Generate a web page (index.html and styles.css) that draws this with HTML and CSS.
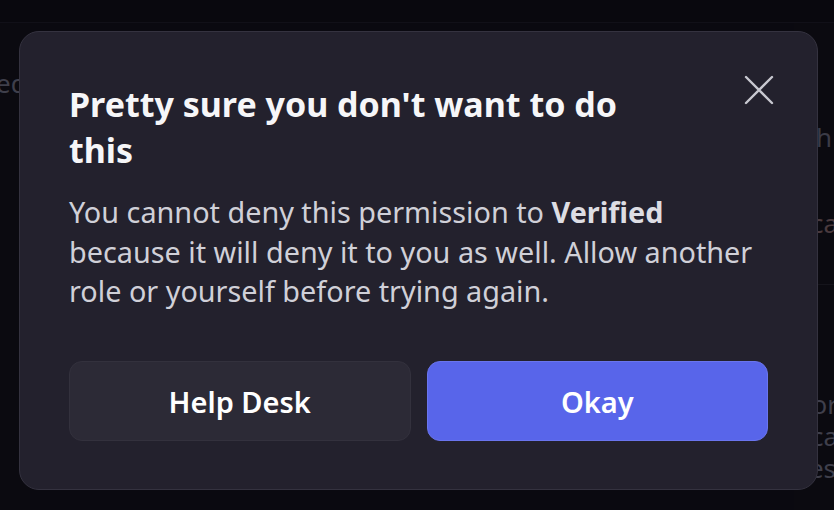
FILE: index.html
```html
<!DOCTYPE html>
<html lang="en">
<head>
<meta charset="utf-8">
<title>Confirm</title>
<link rel="stylesheet" href="styles.css">
</head>
<body>
<div class="backdrop">
  <div class="topbar"></div>
  <div class="bg-main">
    <div class="bg-left"><span class="frag frag-ed">ed</span></div>
    <div class="bg-right">
      <span class="frag frag-h">h</span>
      <span class="frag frag-ca red">ca</span>
      <div class="bg-divider"></div>
      <span class="frag frag-or">or</span>
      <span class="frag frag-ca2">ca</span>
      <span class="frag frag-es">es</span>
    </div>
  </div>
</div>

<div class="modal" role="dialog">
  <button class="close" aria-label="Close">
    <svg viewBox="0 0 30 30" width="30" height="30"><path d="M2 2 L28 28 M28 2 L2 28" stroke="#c8c8d0" stroke-width="2.4" stroke-linecap="round" fill="none"/></svg>
  </button>
  <h1 class="title">Pretty sure you don't want to do this</h1>
  <p class="body">You cannot deny this permission to <strong>Verified</strong> because it will deny it to you as well. Allow another role or yourself before trying again.</p>
  <div class="actions">
    <button class="btn btn-secondary">Help Desk</button>
    <button class="btn btn-primary">Okay</button>
  </div>
</div>
</body>
</html>
```
FILE: styles.css
```css
html, body {
  margin: 0;
  padding: 0;
  background: #0a0910;
  width: 834px;
  height: 510px;
  overflow: hidden;
  font-family: "Noto Sans", "Open Sans", sans-serif;
}

.backdrop {
  display: flex;
  flex-direction: column;
  height: 510px;
}
.topbar {
  height: 22px;
  border-bottom: 1px solid #111018;
  background: #09080e;
}
.bg-main {
  flex: 1;
  display: flex;
  justify-content: space-between;
}
.bg-left {
  width: 30px;
  padding-top: 44px;
  background: #0b0a10;
}
.bg-right {
  width: 40px;
  display: flex;
  flex-direction: column;
  align-items: flex-end;
  background: #0b0a10;
}
.frag {
  font-size: 26px;
  color: #3f3f4b;
  line-height: 32px;
  display: block;
}
.frag-ed { margin-left: -4px; }
.frag-h { margin-top: 98px; margin-right: 2px; color: #3b3b46; }
.frag-ca.red { margin-top: 54px; color: #4a3a3e; margin-right: -4px; }
.bg-divider { width: 40px; height: 1px; background: #15141b; margin-top: 45px; }
.frag-or { margin-top: 103px; margin-right: -4px; }
.frag-ca2 { margin-right: -4px; }
.frag-es { margin-right: -2px; }

.modal {
  position: absolute;
  left: 19px;
  top: 31px;
  width: 799px;
  height: 459px;
  box-sizing: border-box;
  background: #23212d;
  border: 1px solid #34323f;
  border-radius: 20px;
  padding: 49px 49px 48px 49px;
  display: flex;
  flex-direction: column;
}

.close {
  position: absolute;
  top: 43px;
  right: 43px;
  width: 30px;
  height: 30px;
  padding: 0;
  border: 0;
  background: transparent;
  display: flex;
}

.title {
  margin: 0 90px 0 0;
  font-size: 34px;
  line-height: 46px;
  font-weight: 700;
  color: #f6f6f8;
}

.body {
  margin: 19px 0 0 0;
  font-size: 28.8px;
  line-height: 39.5px;
  color: #d0d0d8;
}
.body strong {
  font-weight: 700;
  color: #dddde3;
}

.actions {
  margin-top: auto;
  display: flex;
  gap: 16px;
}
.btn {
  flex: 1;
  height: 80px;
  border-radius: 13px;
  font-family: inherit;
  font-size: 29px;
  font-weight: 600;
  color: #ffffff;
  cursor: pointer;
}
.btn-secondary {
  background: #2c2a36;
  border: 1px solid #33313d;
}
.btn-primary {
  background: #5865ea;
  border: 1px solid #6a75ee;
}
```
